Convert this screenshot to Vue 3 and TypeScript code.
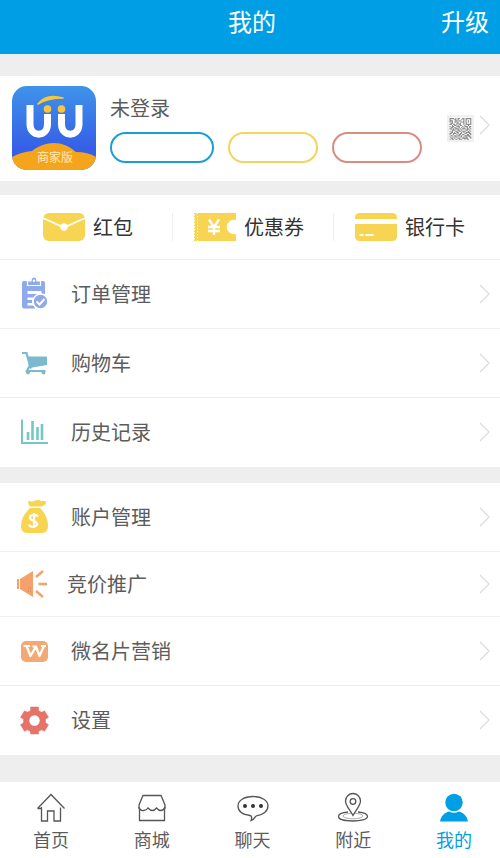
<script setup lang="ts">
interface Row {
  id: string
  label: string
  compact?: boolean
}

const orderRows: Row[] = [
  { id: 'orders', label: '订单管理' },
  { id: 'cart', label: '购物车' },
  { id: 'history', label: '历史记录' },
]

const accountRows: Row[] = [
  { id: 'account', label: '账户管理' },
  { id: 'promo', label: '竞价推广', compact: true },
  { id: 'card', label: '微名片营销' },
  { id: 'settings', label: '设置' },
]

const groups: Row[][] = [orderRows, accountRows]

const wallet: Row[] = [
  { id: 'packet', label: '红包' },
  { id: 'coupon', label: '优惠券' },
  { id: 'bank', label: '银行卡' },
]

const tabs: Row[] = [
  { id: 'home', label: '首页' },
  { id: 'mall', label: '商城' },
  { id: 'chat', label: '聊天' },
  { id: 'near', label: '附近' },
  { id: 'me', label: '我的' },
]
const activeTab = 'me'

// Modules of the small QR code, one string per line.
const qr: string[] = [
  '1111010110011011111',
  '1000110100101010001',
  '1110011011001010101',
  '1010110100111010101',
  '0110001101001010001',
  '1101101011001011111',
  '0010110101100100100',
  '1011001110010111011',
  '0110110010101001010',
  '1101011101011101101',
  '0011100110100011010',
  '1010011011011100101',
  '0110101100101011110',
  '1101110101100110011',
  '1001001011011001101',
  '0110110110100111110',
  '1001011001101010011',
  '0110100110011111001',
  '1011011011100101100',
]
const qrPath: string = qr
  .map((line, y) =>
    [...line].map((c, x) => (c === '1' ? `M${x} ${y}h1v1h-1z` : '')).join(''),
  )
  .join('')
</script>

<template>
  <div class="page">
    <header class="topbar">
      <h1>我的</h1>
      <a class="upgrade" href="#upgrade">升级</a>
    </header>

    <section class="profile">
      <svg class="avatar" viewBox="0 0 84 84" role="img" aria-label="UU 商家版">
        <defs>
          <linearGradient id="sky" x1="0" y1="0" x2="0" y2="1">
            <stop offset="0" stop-color="#3f93ea" />
            <stop offset="0.75" stop-color="#355fe6" />
          </linearGradient>
          <clipPath id="tile"><rect width="84" height="84" rx="15" /></clipPath>
        </defs>
        <g clip-path="url(#tile)">
          <rect width="84" height="84" fill="url(#sky)" />
          <path d="M0 84V71q9-5 20-6Q30 57 42 57t22 9q12 0 20 5v13z" fill="#f4a51c" />
          <path d="M18 19v19c0 13.500 17.500 13.500 17.500 0V28M49.500 28v10c0 13.500 17.500 13.500 17.500 0V19" fill="none" stroke="#fff" stroke-width="7" />
          <path d="M26 18Q34 7 51 12Q36 12 26 18z" fill="#f6c63c" stroke="#f6c63c" stroke-width="1.500" stroke-linejoin="round" />
          <circle cx="35.500" cy="23" r="3.800" fill="#f6c63c" />
          <circle cx="49.500" cy="23" r="3.800" fill="#f6c63c" />
          <text x="43" y="76" text-anchor="middle" class="avatar-text">商家版</text>
        </g>
      </svg>
      <div class="identity">
        <a class="login" href="#login">未登录</a>
        <div class="pills">
          <span class="pill blue"></span>
          <span class="pill yellow"></span>
          <span class="pill red"></span>
        </div>
      </div>
      <a class="qr-link" href="#qr" aria-label="二维码">
        <svg class="qr" viewBox="-4 -3 27 27" aria-hidden="true">
          <rect x="-4" y="-3" width="27" height="27" fill="#f0f0f0" />
          <rect x="-2" y="-1" width="23" height="23" fill="#fafafa" />
          <path :d="qrPath" fill="#8c8c8c" transform="translate(-1.500 0) scale(1.150)" />
        </svg>
        <svg class="chevron" viewBox="0 0 11 20" aria-hidden="true"><path d="M1 1l9 9-9 9" /></svg>
      </a>
    </section>

    <nav class="wallet">
      <a v-for="item in wallet" :key="item.id" :class="item.id" :href="'#' + item.id">
        <svg viewBox="0 0 42 28" aria-hidden="true">
          <template v-if="item.id === 'packet'">
            <rect width="42" height="28" rx="6" fill="#f7d552" />
            <path d="M0 5l21 9.500L42 5" fill="none" stroke="#fff" stroke-width="1.800" />
            <circle cx="21" cy="14" r="3.700" fill="#fff" />
          </template>
          <template v-else-if="item.id === 'coupon'">
            <path d="M0 0h42v7a7.300 7.300 0 1 0 0 14v7H0z" fill="#f7d552" />
            <path d="M0.500 1v27" stroke="#fff" stroke-width="1" stroke-dasharray="1.500 1.500" />
            <path d="M3.500 0v28" stroke="#fff" stroke-width="0.700" stroke-dasharray="1.500 1.500" />
            <path d="M15 6.500l5 7.500 5-7.500M14 14h12M14 18h12M20 14v8" fill="none" stroke="#fff" stroke-width="2.400" />
          </template>
          <template v-else>
            <rect width="42" height="28" rx="4.500" fill="#f7d552" />
            <path d="M0 8.500h42" stroke="#fff" stroke-width="5" />
            <path d="M4.500 22h4M10.500 22h8" stroke="#fff" stroke-width="2" />
          </template>
        </svg>
        <span>{{ item.label }}</span>
      </a>
    </nav>

    <nav v-for="(rows, i) in groups" :key="i" class="group">
      <a v-for="row in rows" :key="row.id" class="row" :class="{ compact: row.compact }" :href="'#' + row.id">
        <svg class="row-icon" viewBox="0 0 32 36" aria-hidden="true">
          <template v-if="row.id === 'orders'">
            <path d="M6 5h19q2 0 2 2v11h-3.500v-3H9.500v3H20l-4 3.500H9.500V24H14v3H9.500v2.500h6l2 3H6q-2 0-2-2V7q0-2 2-2z" fill="#8faaea" />
            <path d="M9.500 9.500V5H13q0-4 3-4t3 4h3.500v4.500z" fill="#8faaea" stroke="#fff" stroke-width="1.200" />
            <circle cx="16" cy="4.800" r="1.200" fill="#fff" />
            <circle cx="22.500" cy="25.500" r="7.500" fill="#8faaea" stroke="#fff" stroke-width="1.600" />
            <path d="M18.500 25.500l3 3 5-5.500" fill="none" stroke="#fff" stroke-width="2" />
          </template>
          <template v-else-if="row.id === 'cart'">
            <path d="M4 8h4.500l4.500 15.500" fill="none" stroke="#7bb9cd" stroke-width="2.200" />
            <path d="M8.500 11.500H29V20l-17.500 3z" fill="#7bb9cd" />
            <path d="M11.500 21L9 26h18.500" fill="none" stroke="#7bb9cd" stroke-width="2.200" />
            <circle cx="10" cy="27.500" r="1.900" fill="#7bb9cd" />
            <circle cx="25.500" cy="27.500" r="1.900" fill="#7bb9cd" />
          </template>
          <template v-else-if="row.id === 'history'">
            <path d="M4 5.500V29h26" fill="none" stroke="#76c6c6" stroke-width="2" />
            <path d="M10 26v-8M14.500 26V7M19.500 26V13M24 26V10" stroke="#76c6c6" stroke-width="2.600" />
          </template>
          <template v-else-if="row.id === 'account'">
            <path d="M12 7.500q-4-5.500 0-5.500 2 1 4 0 5-2 7 0 5-1 5 2 0 2-5 3.500z" fill="#f7d552" />
            <path d="M12 9h10c4 4 8 10 8 18q0 7-6 7H9q-6 0-6-7c0-8 5-14 9-18z" fill="#f7d552" />
            <path d="M20 17.500q-2-2-5-1.500t-3 2.500 3 3 4 3-3 3-5-2M16 14v15" fill="none" stroke="#fff" stroke-width="2.200" />
          </template>
          <template v-else-if="row.id === 'promo'">
            <path d="M3 13h2v10H3z" fill="#f4a26c" />
            <path d="M6 13L19 5v26L6 23z" fill="#f4a26c" />
            <path d="M22 11l7-6M24.500 18H33M22 25l7 6" stroke="#f4a26c" stroke-width="2.400" />
            <path d="M14 22h3M14 25h3" stroke="#c9764a" stroke-width="0.700" stroke-dasharray="1 1" />
          </template>
          <template v-else-if="row.id === 'card'">
            <rect x="3" y="8" width="27" height="21" rx="5" fill="#f3a973" />
            <path d="M8.500 13l4 10 5.500-9.500L21.500 23 26 13M5.500 13H12M14.500 13.500H18M23 13h5" fill="none" stroke="#fff" stroke-width="2.200" stroke-linejoin="round" />
          </template>
          <template v-else>
            <path
              d="M12.500 5h8v3.500l3 1.800 3-1.500 4 6.500-3 2v3.500l3 2-4 6.500-3-1.500-3 1.700V32h-8v-2.500l-3-1.700-3 1.500-4-6.500 3-2v-3.500l-3-2 4-6.500 3 1.500 3-1.800z"
              fill="#e57368" stroke="#e57368" stroke-linejoin="round" stroke-width="0.500"
            />
            <circle cx="16.500" cy="18.500" r="5.200" fill="#fff" />
          </template>
        </svg>
        <span class="row-label">{{ row.label }}</span>
        <svg class="chevron" viewBox="0 0 11 20" aria-hidden="true"><path d="M1 1l9 9-9 9" /></svg>
      </a>
    </nav>

    <nav class="tabbar">
      <a
        v-for="tab in tabs" :key="tab.id" :href="'#' + tab.id"
        :class="{ active: tab.id === activeTab }" :aria-current="tab.id === activeTab ? 'page' : undefined"
      >
        <svg viewBox="0 0 32 32" aria-hidden="true">
          <g v-if="tab.id === 'home'" class="line">
            <path d="M2.500 16.500L16 2.500l13.500 14M2.500 16.500h4M6.500 15v14h6V19h6.500v10h6.500V15.500" />
          </g>
          <g v-else-if="tab.id === 'mall'" class="line">
            <path d="M7 3.500h18l4 9.500v3H3v-3z" />
            <path d="M3.500 15v13.500h25V15" />
            <path d="M3 15q1 4 4.500 3.500T12 16q4.500 5 8.500 0 2 2.500 4.500 2.500T29 15" class="awning" />
          </g>
          <g v-else-if="tab.id === 'chat'">
            <path class="line" d="M16 4.500c9 0 15 4 15 9.500 0 5-5 9-11.500 9.800-1.500.2-1.500 3.700-5.500 4.700 1-2 1-4.700-1-5C5.500 22.500 1 19 1 14c0-5.500 6-9.500 15-9.500z" />
            <circle cx="8" cy="14" r="2" fill="#333" />
            <circle cx="16" cy="14" r="2" fill="#333" />
            <circle cx="24" cy="14" r="2" fill="#333" />
          </g>
          <g v-else-if="tab.id === 'near'" class="line">
            <path d="M11 20C5 20.500 1.500 22 1.500 24.500c0 6 29 6 29 0C30.500 22 27 20.500 21 20" />
            <ellipse cx="16" cy="24" rx="10" ry="2.800" class="faint" />
            <path d="M16 23.500C13 18 8.500 13.500 8.500 9a7.500 7.500 0 0 1 15 0c0 4.500-4.500 9-7.500 14.500z" fill="#fff" />
            <circle cx="16" cy="9.500" r="2.800" />
          </g>
          <g v-else fill="#009fe5">
            <circle cx="16" cy="10.500" r="8.700" />
            <path d="M2 29.500c1-6 5-9 9-10q5 2.500 10 0c4 1 8 4 9 10z" />
          </g>
        </svg>
        <span>{{ tab.label }}</span>
      </a>
    </nav>
  </div>
</template>

<style>
body {
  margin: 0;
  background: #eeeeee;
}
</style>

<style scoped>
.page {
  display: flex;
  flex-direction: column;
  min-height: 100vh;
  font-family: "Noto Sans CJK SC", sans-serif;
  font-size: 20px;
  line-height: 28px;
  color: #5c5c5c;
}
a {
  color: inherit;
  text-decoration: none;
}
svg {
  display: block;
  flex: none;
}
.topbar {
  display: grid;
  grid-template-columns: 1fr auto 1fr;
  align-items: center;
  padding: 3px 11px 15px;
  background: #009fe5;
  color: #ffffff;
  font-size: 24px;
  line-height: 36px;
}
.topbar h1 {
  grid-column: 2;
  margin: 0;
  padding-left: 4px;
  font-size: inherit;
  font-weight: 400;
}
.upgrade {
  justify-self: end;
}
.profile {
  display: flex;
  align-items: center;
  gap: 14px;
  margin-top: 22px;
  padding: 10px 10px 11px 12px;
  background: #ffffff;
}
.avatar {
  width: 84px;
  height: 84px;
}
.avatar-text {
  fill: #ffe9b8;
  font-size: 12px;
}
.identity {
  flex: 1;
  min-width: 0;
}
.login {
  display: block;
  margin-bottom: 10px;
}
.pills {
  display: flex;
  gap: 14px;
}
.pill {
  box-sizing: border-box;
  width: 90px;
  height: 31px;
  border: 2px solid;
  border-radius: 16px;
}
.pill.blue {
  width: 104px;
  border-color: #199fd6;
}
.pill.yellow {
  border-color: #f3d45c;
}
.pill.red {
  border-color: #d98c80;
}
.qr-link {
  display: flex;
  align-items: flex-start;
  gap: 5px;
}
.qr {
  width: 27px;
  height: 27px;
}
.chevron {
  width: 11px;
  height: 20px;
  fill: none;
  stroke: #dcdcdc;
  stroke-width: 1.3;
}
.wallet {
  display: grid;
  grid-template-columns: 172fr 161fr 167fr;
  margin-top: 14px;
  padding: 18px 0;
  background: #ffffff;
  border-bottom: 1px solid #eeeeee;
  color: #333333;
}
.wallet a {
  display: flex;
  align-items: center;
  justify-content: center;
  gap: 8px;
}
.wallet a + a {
  border-left: 1px solid #eeeeee;
}
.wallet .packet {
  padding-left: 4px;
}
.wallet .coupon {
  padding-right: 8px;
}
.wallet .bank {
  padding-right: 14px;
}
.wallet svg {
  width: 42px;
  height: 28px;
}
.group {
  background: #ffffff;
}
.group + .group {
  margin-top: 16px;
}
.row {
  display: flex;
  align-items: center;
  gap: 21px;
  padding: 16px 10px 16px 18px;
  border-bottom: 1px solid #eeeeee;
}
.row:last-child {
  border-bottom-color: #ffffff;
}
.row.compact {
  padding: 14px 10px 14px 14px;
}
.row-icon {
  width: 32px;
  height: 36px;
  overflow: visible;
}
.row-label {
  flex: 1;
}
.tabbar {
  display: flex;
  justify-content: space-between;
  margin-top: auto;
  padding: 10px 28px 4px 33px;
  background: #ffffff;
  font-size: 18px;
  line-height: 30px;
}
.tabbar a {
  display: flex;
  flex-direction: column;
  align-items: center;
}
.tabbar svg {
  width: 32px;
  height: 32px;
}
.tabbar .active {
  color: #009fe5;
}
.line {
  fill: none;
  stroke: #555555;
  stroke-width: 1.3;
}
.awning {
  fill: #ffffff;
}
.faint {
  stroke: #999999;
  stroke-width: 0.8;
}
</style>
